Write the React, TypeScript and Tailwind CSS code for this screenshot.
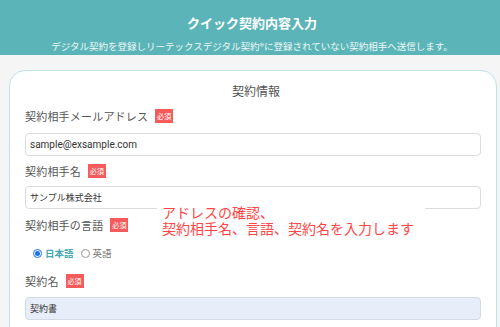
import React from "react"

const font = { fontFamily: '"Noto Sans CJK JP", "Noto Sans", sans-serif' }

const Badge = () => (
  <span className="ml-[7px] inline-flex items-center justify-center w-[18px] h-[14px] bg-[#f65b5b] text-white text-[7px] leading-none">
    必須
  </span>
)

const Label = ({ text }: { text: string }) => (
  <div className="flex items-center h-[20px] text-[11px] text-[#555] tracking-[0.2px]">
    {text}
    <Badge />
  </div>
)

const Field = ({ value, filled, size }: { value: string; filled?: boolean; size: string }) => (
  <div
    className={`h-[23px] flex items-center px-[4px] rounded-[4px] border text-[#333] ${size} ${
      filled ? "bg-[#e8eef9] border-[#d3dbe6]" : "bg-white border-[#dcdcdc]"
    }`}
  >
    {value}
  </div>
)

export default function App() {
  return (
    <div className="w-[500px] h-[327px] overflow-hidden bg-[#f5f5f5]" style={font}>
      <div className="h-[55px] bg-[#5bb5b8] flex flex-col items-center text-white">
        <div className="mt-[13px] text-[13px] font-bold leading-[20px] pl-[4px]">クイック契約内容入力</div>
        <div className="mt-[6px] text-[9.5px] leading-[14px] text-[#eef8f8] pl-[4px]">
          デジタル契約を登録しリーテックスデジタル契約®に登録されていない契約相手へ送信します。
        </div>
      </div>

      <div className="mt-[15px] ml-[9px] mr-[3px] h-[300px] bg-white rounded-t-[16px] border border-[#bfe3e6] relative">
        <div className="pt-[10px] text-center text-[12px] text-[#555] leading-[20px] pl-[6px]">契約情報</div>

        <div className="px-[15px] mt-[5px] flex flex-col">
          <Label text="契約相手メールアドレス" />
          <div className="mt-[7px]">
            <Field value="sample@exsample.com" size="text-[10px] font-['Roboto',sans-serif]" />
          </div>

          <div className="mt-[5px]">
            <Label text="契約相手名" />
          </div>
          <div className="mt-[5px]">
            <Field value="サンプル株式会社" size="text-[9px]" />
          </div>

          <div className="mt-[6px]">
            <Label text="契約相手の言語" />
          </div>

          <div className="mt-[10px] ml-[8px] flex items-center gap-[3px] text-[9.5px] h-[16px]">
            <span className="w-[9px] h-[9px] rounded-full border border-[#1a73e8] flex items-center justify-center">
              <span className="w-[5px] h-[5px] rounded-full bg-[#1a73e8]" />
            </span>
            <span className="text-[#43a9ad] font-bold">日本語</span>
            <span className="ml-[4px] w-[9px] h-[9px] rounded-full border border-[#999]" />
            <span className="text-[#777]">英語</span>
          </div>

          <div className="mt-[10px]">
            <Label text="契約名" />
          </div>
          <div className="mt-[6px]">
            <Field value="契約書" filled size="text-[9px]" />
          </div>
        </div>

        <div className="absolute left-[147px] top-[133px] w-[268px] bg-white pl-[5px] pt-[0px] pb-[2px] text-[14px] leading-[16px] text-[#ff4545]">
          アドレスの確認、
          <br />
          契約相手名、言語、契約名を入力します
        </div>
      </div>
    </div>
  )
}
